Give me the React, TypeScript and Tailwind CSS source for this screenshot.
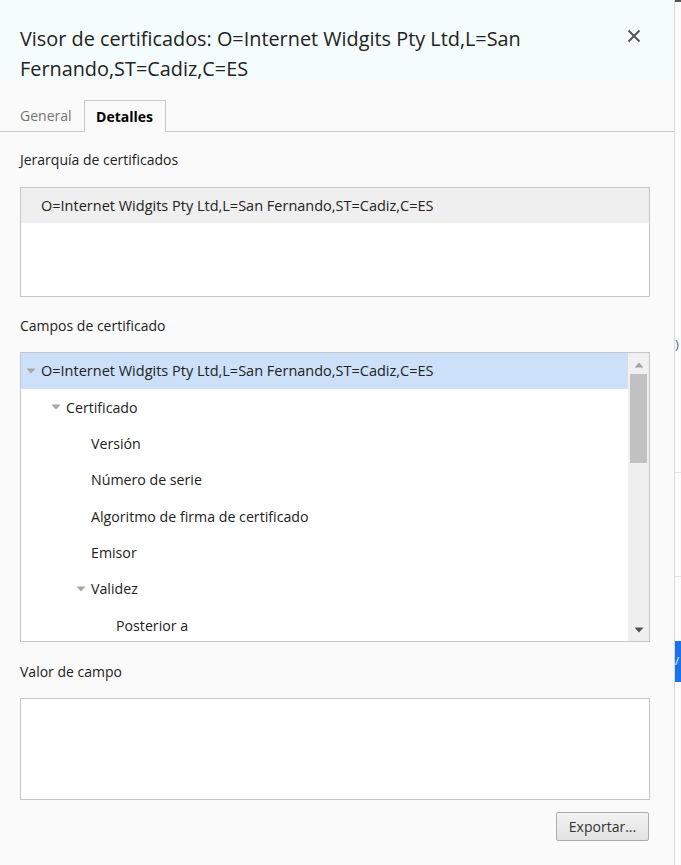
import React from 'react';

const font = { fontFamily: '"Segoe UI", "Open Sans", sans-serif' };

type Row = { label: string; depth: number; expandable?: boolean; selected?: boolean };

const fields: Row[] = [
  { label: 'O=Internet Widgits Pty Ltd,L=San Fernando,ST=Cadiz,C=ES', depth: 0, expandable: true, selected: true },
  { label: 'Certificado', depth: 1, expandable: true },
  { label: 'Versión', depth: 2 },
  { label: 'Número de serie', depth: 2 },
  { label: 'Algoritmo de firma de certificado', depth: 2 },
  { label: 'Emisor', depth: 2 },
  { label: 'Validez', depth: 2, expandable: true },
  { label: 'Posterior a', depth: 3 },
];

const Caret: React.FC = () => (
  <svg width="10" height="6" viewBox="0 0 10 6" className="shrink-0">
    <path d="M0.5 0.5 H9.5 L5 5.5 Z" fill="#a6a6a6" />
  </svg>
);

const indents = ['pl-[5px]', 'pl-[30px]', 'pl-[55px]', 'pl-[80px]'];

const TreeRow: React.FC<{ row: Row }> = ({ row }) => (
  <div
    className={`flex h-[36.3px] items-center gap-[5px] ${indents[row.depth]} ${row.selected ? 'bg-[#cce1f9]' : ''}`}
  >
    {row.expandable ? <Caret /> : <span className="w-[10px] shrink-0" />}
    <span className={`whitespace-nowrap ${row.depth === 0 ? 'text-[14.5px]' : 'text-[14.2px]'}`}>{row.label}</span>
  </div>
);

const Scrollbar: React.FC = () => (
  <div className="flex w-[21px] shrink-0 flex-col items-center bg-[#f0f0f0]">
    <svg width="10" height="6" viewBox="0 0 10 6" className="mt-[9px]">
      <path d="M0.5 5.5 H9.5 L5 0.5 Z" fill="#a3a3a3" />
    </svg>
    <div className="mt-[6px] h-[89px] w-[17px] bg-[#c1c1c1]" />
    <div className="flex-1" />
    <svg width="10" height="6" viewBox="0 0 10 6" className="mb-[8px]">
      <path d="M0.5 0.5 H9.5 L5 5.5 Z" fill="#505050" />
    </svg>
  </div>
);

export default function App() {
  return (
    <div className="flex h-[865px] w-[681px] overflow-hidden bg-white text-[14px] text-[#222]" style={font}>
      <div className="flex w-[675px] shrink-0 flex-col border-r border-[#d9d9d9] bg-[#fafafa]">
        <div className="flex h-[82px] items-start justify-between bg-[#f4fcfc] pl-5 pr-[33px] pt-[24px]">
          <h1 className="w-[540px] text-[19.85px] leading-[30px] text-[#222]">
            Visor de certificados: O=Internet Widgits Pty Ltd,L=San Fernando,ST=Cadiz,C=ES
          </h1>
          <svg width="14" height="14" viewBox="0 0 14 14" className="mt-[5px]">
            <path d="M1.5 1.5 L12.5 12.5 M12.5 1.5 L1.5 12.5" stroke="#555" strokeWidth="2" />
          </svg>
        </div>

        <div className="mt-[18px] flex h-[32px] items-end border-b border-[#c8c8c8] pl-5">
          <div className="flex h-full items-center pr-3 text-[#737373]">General</div>
          <div className="-mb-px flex h-[32px] w-[82px] items-center justify-center border border-b-0 border-[#c8c8c8] bg-[#fafafa] font-bold text-black">
            Detalles
          </div>
        </div>

        <div className="flex flex-col px-5">
          <div className="mt-[18px] leading-[20px]">Jerarquía de certificados</div>
          <div className="mt-[17px] h-[110px] w-[630px] border border-[#c6c6c6] bg-white">
            <div className="flex h-[35px] items-center bg-[#efefef] pl-5 text-[14.5px]">
              O=Internet Widgits Pty Ltd,L=San Fernando,ST=Cadiz,C=ES
            </div>
          </div>

          <div className="mt-[19px] leading-[20px]">Campos de certificado</div>
          <div className="mt-[16px] flex h-[290px] w-[630px] border border-[#c6c6c6] bg-white">
            <div className="flex-1 overflow-hidden">
              {fields.map((r) => (
                <TreeRow key={r.label} row={r} />
              ))}
            </div>
            <Scrollbar />
          </div>

          <div className="mt-[20px] leading-[20px]">Valor de campo</div>
          <div className="mt-[16px] h-[102px] w-[630px] border border-[#c6c6c6] bg-white" />

          <div className="mt-[12px] flex justify-end pr-[5px]">
            <button className="h-[29px] w-[93px] rounded-[2px] border border-[#adadad] bg-gradient-to-b from-[#f3f3f3] to-[#e2e2e2] text-[#333]">
              Exportar...
            </button>
          </div>
        </div>
      </div>

      <div className="flex flex-1 flex-col bg-[#fbfbfb]">
        <div className="h-[2px] bg-[#555]" />
        <div className="mt-[334px] text-[13px] leading-[16px] text-[#3b6fb6]">)</div>
        <div className="mt-[120px] h-px bg-[#e3e3e3]" />
        <div className="mt-[103px] h-px bg-[#e3e3e3]" />
        <div className="mt-[64px] h-[41px] bg-[#1a73e8] pt-[14px] text-[11px] leading-[12px] text-white">/</div>
      </div>
    </div>
  );
}
